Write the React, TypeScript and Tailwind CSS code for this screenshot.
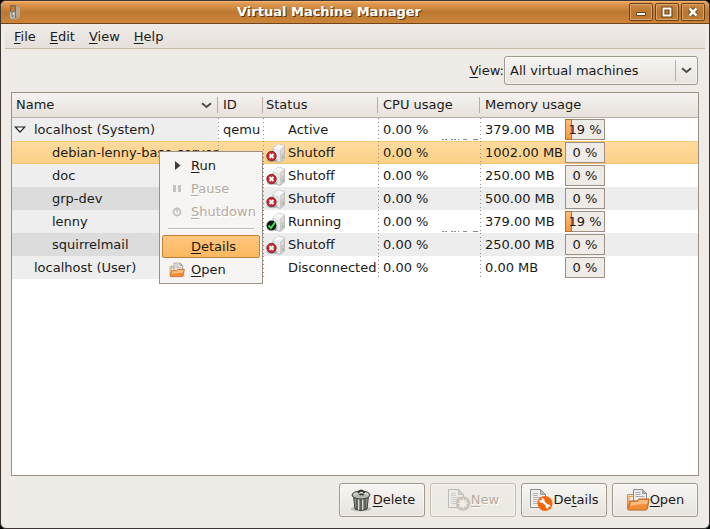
import type { ReactNode } from 'react';

type Status = 'off' | 'on' | null;

interface Row {
  name: string;
  id?: string;
  level: number;
  expandable?: boolean;
  status: string;
  icon: Status;
  memory: string;
  percent: number;
  cpuGraph?: boolean;
  tone: 'plain' | 'striped' | 'selected';
}

const rows: Row[] = [
  { name: 'localhost (System)', id: 'qemu', level: 0, expandable: true, status: 'Active', icon: null, memory: '379.00 MB', percent: 19, cpuGraph: true, tone: 'plain' },
  { name: 'debian-lenny-base-server', level: 1, status: 'Shutoff', icon: 'off', memory: '1002.00 MB', percent: 0, tone: 'selected' },
  { name: 'doc', level: 1, status: 'Shutoff', icon: 'off', memory: '250.00 MB', percent: 0, tone: 'plain' },
  { name: 'grp-dev', level: 1, status: 'Shutoff', icon: 'off', memory: '500.00 MB', percent: 0, tone: 'striped' },
  { name: 'lenny', level: 1, status: 'Running', icon: 'on', memory: '379.00 MB', percent: 19, cpuGraph: true, tone: 'plain' },
  { name: 'squirrelmail', level: 1, status: 'Shutoff', icon: 'off', memory: '250.00 MB', percent: 0, tone: 'striped' },
  { name: 'localhost (User)', level: 0, status: 'Disconnected', icon: null, memory: '0.00 MB', percent: 0, tone: 'plain' },
];

const toneClass = {
  plain: 'bg-white',
  striped: 'bg-[#ededed]',
  selected: 'bg-linear-to-b from-[#ffdb9f] to-[#fbd085] shadow-[inset_0_1px_0_#f5c878,inset_0_-1px_0_#f3c677]',
};

const nameToneClass = { plain: 'bg-[#eeeeee]', striped: 'bg-[#dcdcdc]', selected: '' };

function Mnemonic({ text, at = 0 }: { text: string; at?: number }) {
  return (
    <span>
      {text.slice(0, at)}
      <span className="underline decoration-1 underline-offset-2">{text[at]}</span>
      {text.slice(at + 1)}
    </span>
  );
}

function Chevron() {
  return (
    <svg width="11" height="7" viewBox="0 0 11 7" aria-hidden="true">
      <path d="M1 1.2 5.5 5 10 1.2" fill="none" stroke="#4c4c4c" strokeWidth="1.9" />
    </svg>
  );
}

function AppIcon() {
  return (
    <svg width="12" height="16" viewBox="0 0 12 16" aria-hidden="true">
      <path d="M6 3 8 1 11 4v9l-3 1z" fill="#a9967f" />
      <path d="M8 3v10M10 4v9" stroke="#d2c2ac" strokeWidth=".8" />
      <rect x="1" y="1" width="6" height="13" rx="1" fill="#9a5a20" />
      <path d="M2 2h4v6H2z" fill="#d47c26" stroke="#74706b" />
      <path d="M1 8h5v6H1z" fill="#dcdcd8" stroke="#8a8a88" strokeWidth=".7" />
      <path d="M3 8v3M2 12h3" stroke="#55595b" />
      <path d="m1 14 3 1 6-1" stroke="#aaa" fill="none" />
    </svg>
  );
}

function WindowButton({ label, children }: { label: string; children: ReactNode }) {
  return (
    <button
      type="button"
      aria-label={label}
      className="flex h-[18px] w-6 items-center justify-center rounded-[2px] border border-[#6b4218] bg-linear-to-b from-[#d18b45] via-[#b87732] to-[#bf7d36] shadow-[inset_0_0_0_1px_#dda467]"
    >
      <svg width="12" height="12" viewBox="0 0 12 12" aria-hidden="true">
        {children}
      </svg>
    </button>
  );
}

function MachineIcon({ on }: { on: boolean }) {
  return (
    <svg width="20" height="20" viewBox="0 0 20 20" aria-hidden="true" className="shrink-0">
      <path d="M7 5.500 12 1l6.500 2v13L14 19.500 7 17z" fill="#e6e6e6" stroke="#a8a8a8" strokeWidth=".8" />
      <path d="M7 5.500 12 1l6.500 2L14 7z" fill="#f7f7f7" />
      <path d="M14 7l4.500-4v13L14 19.500z" fill="#c9c9c9" />
      <path d="M14.800 8.500 17.800 6M14.800 10.500 17.800 8" stroke="#f2f2f2" strokeWidth=".8" />
      <path d="M17 13.500v2" stroke="#7fb469" />
      <ellipse cx="6" cy="17" rx="5.500" ry="2.200" fill="#000" opacity=".2" />
      {on ? (
        <>
          <circle cx="5.500" cy="13.500" r="5" fill="#111a14" />
          <path d="M2.500 13.500 5 16l4-5.500" fill="none" stroke="#3fe052" strokeWidth="2" />
        </>
      ) : (
        <>
          <circle cx="5.500" cy="13" r="4.700" fill="#cb2730" stroke="#7b2226" strokeWidth=".9" />
          <path d="m3.500 11 4 4m0-4-4 4" stroke="#fff" strokeWidth="1.800" />
        </>
      )}
    </svg>
  );
}

function FolderIcon({ size }: { size: 'small' | 'large' }) {
  return (
    <svg className={size === 'small' ? 'h-4 w-4' : 'h-6 w-6'} viewBox="0 0 24 24" aria-hidden="true">
      <path d="M1.500 20V6.500h6l2 2H20V20z" fill="#f5efe8" stroke="#a69684" />
      <path d="M3 18V8.500h4.500" stroke="#f2a35c" strokeWidth="1.500" fill="none" />
      <path d="M7.500 15V1.500h9l4 4V15z" fill="#eee" stroke="#8b8b8b" />
      <path d="M16.500 1.500v4h4z" fill="#bbb" stroke="#888" strokeWidth=".8" />
      <path d="M9.500 4.500h5M9.500 6.500h5M9.500 8.500h9" stroke="#aaa" />
      <path d="M4 13h7l2-2h10l-1.500 9.500q-.3 1.500-2 1.500H3q-1.500 0-1.300-1.500z" fill="#f58b35" stroke="#b9631d" />
      <path d="M5 14h6.500l2-2h8.300l-.7 4q-8 0-16.600 2z" fill="#fbbd81" />
    </svg>
  );
}

function TrashIcon() {
  return (
    <svg className="h-6 w-6" viewBox="0 0 24 24" aria-hidden="true">
      <ellipse cx="12" cy="21" rx="10.500" ry="2.500" fill="#000" opacity=".18" />
      <path d="M4.500 8 6 21q6 3 12 0l1.500-13z" fill="#8d918a" stroke="#383b36" />
      <path d="M8 10v11M12 11v11.500M16 10v11" stroke="#42463f" strokeWidth="1.200" />
      <path d="M9.500 11v11M13.500 11v11" stroke="#d5d8d1" />
      <ellipse cx="12" cy="7" rx="9" ry="4" fill="#b5b8b1" stroke="#383b36" />
      <path d="M5 6.500q7-4.500 14 0" stroke="#f1f2ee" fill="none" />
      <path d="M9 5q3-5 6.500 0" stroke="#30332e" strokeWidth="1.800" fill="none" />
      <path d="M10.500 7q1.500-1.500 4 0" stroke="#30332e" strokeWidth="1.500" fill="none" />
    </svg>
  );
}

function Page() {
  return (
    <>
      <path d="M1.500 1.500h10l5 5v13h-15z" fill="#eeeeec" stroke="#8d8d8b" />
      <path d="M11.500 1.500v5h5z" fill="#bababa" stroke="#8d8d8b" strokeWidth=".8" />
      <path d="M4 5.500h5M4 7.500h5M4 9.500h10M4 11.500h8M4 13.500h6M4 15.500h5" stroke="#b4b4b2" />
    </>
  );
}

function NewIcon() {
  return (
    <svg className="h-6 w-6 opacity-50" viewBox="0 0 24 24" aria-hidden="true">
      <Page />
      <circle cx="16" cy="15.500" r="7.300" fill="#a89f94" />
      <path d="m16 10 1.300 2.700 2.800-1.200-1.200 2.800 2.700 1.200-2.700 1.300 1.200 2.800-2.800-1.200L16 21l-1.300-2.600-2.800 1.200 1.200-2.800-2.700-1.300 2.700-1.200-1.200-2.800 2.800 1.200z" fill="#f3f1ee" />
    </svg>
  );
}

function DetailsIcon() {
  return (
    <svg className="h-6 w-6" viewBox="0 0 24 24" aria-hidden="true">
      <Page />
      <circle cx="16" cy="15.500" r="7.500" fill="#f4660c" />
      <path d="m13 12.500 6 6" stroke="#fff" strokeWidth="2.400" />
      <circle cx="13" cy="12.500" r="2.500" fill="#fff" />
      <circle cx="19" cy="18.500" r="2.300" fill="#fff" />
      <path d="m10.500 10 2 2M19.500 19l2 2" stroke="#f4660c" strokeWidth="1.800" />
    </svg>
  );
}

function ActionButton({ icon, text, at, disabled }: { icon: ReactNode; text: string; at?: number; disabled?: boolean }) {
  return (
    <button
      type="button"
      disabled={disabled}
      className="flex h-[34px] w-[86px] items-center justify-center rounded-[3px] border border-[#a3988d] bg-linear-to-b from-[#f7f6f4] to-[#e8e3dd] shadow-[inset_0_0_0_1px_#ffffff80] disabled:border-[#c5bcb2] disabled:from-[#efebe6] disabled:to-[#ece8e2] disabled:text-[#b5aa9e] disabled:[text-shadow:1px_1px_0_#fff]"
    >
      {icon}
      <Mnemonic text={text} at={at} />
    </button>
  );
}

function Header({ children, last }: { children: ReactNode; last?: boolean }) {
  return (
    <th scope="col" className="h-[25px] border-b border-[#b9aea3] p-0 text-left font-normal">
      <div className={`flex h-4 items-center pl-[5px] ${last ? '' : 'border-r border-[#b9aca0]'}`}>{children}</div>
    </th>
  );
}

function Meter({ percent }: { percent: number }) {
  return (
    <div
      role="progressbar"
      aria-label="Memory usage"
      aria-valuenow={percent}
      className="relative flex h-[21px] w-10 shrink-0 items-center justify-center border border-[#9d8f81] bg-[#efebe7]"
    >
      {percent > 0 && (
        <span
          className="absolute -inset-y-px -left-px border border-[#b8732c] bg-linear-to-b from-[#ffbe78] to-[#f39a3d]"
          style={{ width: `${percent}%` }}
        />
      )}
      <span className="relative whitespace-pre">{percent} %</span>
    </div>
  );
}

const dots =
  'relative p-0 before:absolute before:inset-y-0 before:left-0 before:w-px before:bg-[repeating-linear-gradient(to_bottom,#8f8f8f_0_1px,transparent_1px_4px)]';

function MachineRow({ row }: { row: Row }) {
  return (
    <tr className={toneClass[row.tone]}>
      <td className={`h-[23px] p-0 ${nameToneClass[row.tone]}`}>
        <div className={`flex items-center whitespace-nowrap ${row.level === 0 ? 'pl-0.5' : 'pl-5'}`}>
          <span className="w-5 shrink-0">
            {row.expandable && (
              <svg width="12" height="8" viewBox="0 0 12 8" aria-hidden="true">
                <path d="M1.200 1h9.600L6 6.200z" fill="#fff" stroke="#1c1c1c" strokeWidth="1.200" />
              </svg>
            )}
          </span>
          {row.name}
        </div>
      </td>
      <td className={dots}>
        <div className="pl-[5px]">{row.id}</div>
      </td>
      <td className={dots}>
        <div className="flex h-[23px] items-center gap-0.5 pl-[3px]">
          {row.icon ? <MachineIcon on={row.icon === 'on'} /> : <span className="w-5" />}
          {row.status}
        </div>
      </td>
      <td className={dots}>
        <div className="flex h-[23px] items-center justify-between pr-0.5 pl-[5px]">
          <span>0.00 %</span>
          {row.cpuGraph && (
            <svg width="36" height="20" className="self-end" aria-hidden="true">
              <path d="M0 18.500h2m1 0h2m4 0h2m1 0h2m2 0h1m4 0h4m6 0h5" stroke="#8a8a8a" fill="none" />
            </svg>
          )}
        </div>
      </td>
      <td className={dots}>
        <div className="flex h-[23px] items-center pl-[5px]">
          <span className="w-20 whitespace-nowrap">{row.memory}</span>
          <Meter percent={row.percent} />
        </div>
      </td>
    </tr>
  );
}

function MenuItem({ icon, text, disabled, active }: { icon?: ReactNode; text: string; disabled?: boolean; active?: boolean }) {
  return (
    <button
      type="button"
      role="menuitem"
      disabled={disabled}
      className={`flex h-[23px] w-full items-center rounded-[2px] border pl-1.5 disabled:text-[#b5aa9e] disabled:[text-shadow:1px_1px_0_#fff] ${
        active ? 'border-[#c18033] bg-linear-to-b from-[#ffc67f] to-[#fbb85f]' : 'border-transparent'
      }`}
    >
      <span className="flex w-[22px]">{icon}</span>
      <Mnemonic text={text} />
    </button>
  );
}

function ContextMenu() {
  return (
    <div
      role="menu"
      className="absolute top-[150px] left-[158px] flex w-[104px] flex-col border border-[#9d8f81] bg-[#f6f5f4] p-0.5"
    >
      <MenuItem
        text="Run"
        icon={
          <svg width="16" height="16" aria-hidden="true">
            <path d="M6 3v9l5.500-4.500z" fill="#3c3c3c" />
          </svg>
        }
      />
      <MenuItem
        text="Pause"
        disabled
        icon={
          <svg width="16" height="16" aria-hidden="true">
            <path d="M4 4h3v7H4zM9 4h3v7H9z" fill="#c7c4c0" />
          </svg>
        }
      />
      <MenuItem
        text="Shutdown"
        disabled
        icon={
          <svg width="16" height="16" aria-hidden="true">
            <circle cx="8" cy="8" r="3.500" fill="none" stroke="#c3bfbb" strokeWidth="1.800" />
            <path d="M8 5v3.500" stroke="#c3bfbb" strokeWidth="1.500" />
          </svg>
        }
      />
      <div role="separator" className="mx-1.5 my-[5px] h-0.5 border-t border-[#c3b8ad] bg-white" />
      <MenuItem text="Details" active />
      <MenuItem text="Open" icon={<FolderIcon size="small" />} />
    </div>
  );
}

export default function App() {
  return (
    <div className="min-h-screen bg-black font-['DejaVu_Sans',sans-serif] text-[13px] leading-4 text-[#1a1a1a]">
      <div className="relative flex min-h-screen flex-col overflow-hidden rounded-[6px] border border-[#3b3633] bg-[#efebe6]">
        <header className="flex h-[23px] items-center border-b border-[#6f4519] bg-linear-to-b from-[#eba45c] via-[#bd7830] to-[#cc8539] pr-1 pl-2 shadow-[inset_0_1px_0_#f0b070]">
          <AppIcon />
          <h1 className="flex-1 pl-2 text-center font-bold text-white [text-shadow:1px_1px_0_#5a3510]">
            Virtual Machine Manager
          </h1>
          <div className="flex gap-0.5">
            <WindowButton label="Minimize">
              <path d="M1.500 6.500h9v3h-9z" fill="#fff" stroke="#6b4218" />
            </WindowButton>
            <WindowButton label="Maximize">
              <path d="M2.500 2.500h7v7h-7z" fill="none" stroke="#6b4218" strokeWidth="4" />
              <path d="M2.500 2.500h7v7h-7z" fill="none" stroke="#fff" strokeWidth="1.800" />
            </WindowButton>
            <WindowButton label="Close">
              <path d="m2.500 2.500 7 7m0-7-7 7" stroke="#6b4218" strokeWidth="4.500" />
              <path d="m2.500 2.500 7 7m0-7-7 7" stroke="#fff" strokeWidth="2.500" />
            </WindowButton>
          </div>
        </header>

        <nav className="mx-1 flex h-[25px] items-center border-b border-[#c6b9a9] bg-linear-to-b from-[#efebe7] to-[#e5e0da] pt-0.5 pl-0.5">
          {['File', 'Edit', 'View', 'Help'].map((label) => (
            <button key={label} type="button" className="px-[7px]">
              <Mnemonic text={label} />
            </button>
          ))}
        </nav>

        <main className="flex flex-1 flex-col px-2.5 pt-[7px] pb-[11px]">
          <div className="mr-px flex items-center justify-end">
            <label htmlFor="view">
              <Mnemonic text="View:" />
            </label>
            <div className="relative">
              <select
                id="view"
                className="block h-[29px] w-[194px] appearance-none rounded-[3px] border border-[#a3988d] bg-linear-to-b from-[#f7f6f4] to-[#e8e3dd] pl-[5px] shadow-[inset_0_0_0_1px_#ffffff80]"
              >
                <option>All virtual machines</option>
              </select>
              <span className="pointer-events-none absolute inset-y-1 right-1.5 flex items-center border-l border-[#b9aca0] pl-[5px]">
                <Chevron />
              </span>
            </div>
          </div>

          <div className="mt-[7px] flex-1 border border-[#9d8f81] bg-white">
            <table className="w-full table-fixed border-separate border-spacing-0">
              <colgroup>
                <col className="w-[206px]" />
                <col className="w-[45px]" />
                <col className="w-[115px]" />
                <col className="w-[102px]" />
                <col />
              </colgroup>
              <thead>
                <tr className="bg-linear-to-b from-[#f5f3f1] to-[#e6e0da]">
                  <Header>
                    <span className="-ml-px flex-1">Name</span>
                    <span className="pr-[5px]">
                      <Chevron />
                    </span>
                  </Header>
                  <Header>ID</Header>
                  <Header>
                    <span className="-ml-0.5">Status</span>
                  </Header>
                  <Header>CPU usage</Header>
                  <Header last>Memory usage</Header>
                </tr>
              </thead>
              <tbody>
                {rows.map((row) => (
                  <MachineRow key={row.name} row={row} />
                ))}
              </tbody>
            </table>
          </div>

          <div className="mt-[7px] mr-px flex justify-end gap-[5px]">
            <ActionButton icon={<TrashIcon />} text="Delete" />
            <ActionButton icon={<NewIcon />} text="New" disabled />
            <ActionButton icon={<DetailsIcon />} text="Details" at={2} />
            <ActionButton icon={<FolderIcon size="large" />} text="Open" />
          </div>
        </main>
        <ContextMenu />
      </div>
    </div>
  );
}
